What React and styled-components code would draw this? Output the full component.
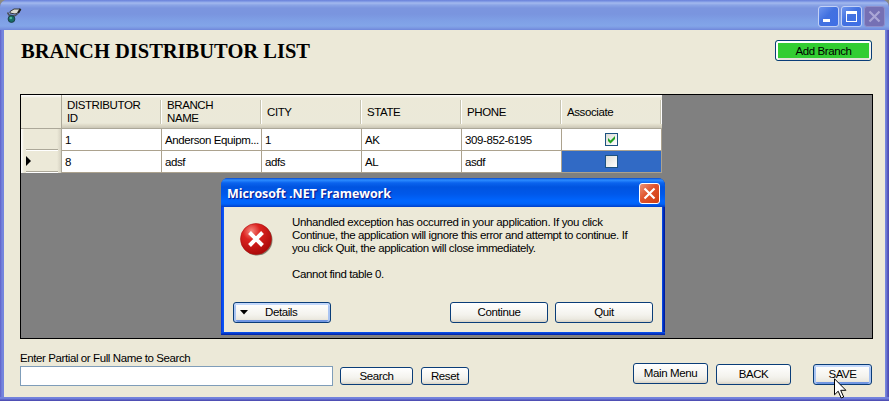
import React from "react";
import styled, { createGlobalStyle, css } from "styled-components";

const GlobalStyle = createGlobalStyle`
  * { box-sizing: border-box; }
  html, body { margin: 0; padding: 0; overflow: hidden; background: #8c8a80; }
  body { font: 11.5px/13px "Liberation Sans", Arial, sans-serif; letter-spacing: -0.4px; color: #000; }
`;

const Window = styled.main`
  position: relative;
  width: 889px;
  height: 401px;
  display: flex;
  flex-direction: column;
  border-radius: 7px 7px 0 0;
  overflow: hidden;
  background: linear-gradient(90deg, #5f5fc8 0, #7585dd 2px, #7585dd 886px, #4f4fb4 888px);
`;

const TitleBar = styled.header`
  height: 30px;
  flex: none;
  display: flex;
  align-items: flex-start;
  padding: 6px 4px 0 6px;
  background: linear-gradient(#6a80d8 0, #7791e2 1px, #a3b9ee 3px, #8ba5e6 5px, #7b95df 8px, #7a95df 14px, #7fa0e6 21px, #82a5e8 26px, #7b98e2 28px, #6f86da 30px);
`;

const TitleSpacer = styled.div`flex: 1;`;

const Controls = styled.div`
  display: flex;
  gap: 2px;
`;

const ControlButton = styled.button`
  width: 21px;
  height: 21px;
  padding: 0;
  border: 1px solid ${(p) => (p.$disabled ? "#8f8fca" : "#c3d1f6")};
  border-radius: 3px;
  background: ${(p) => (p.$disabled ? "#7570b4" : "linear-gradient(135deg, #6e95ee, #4271e0 45%, #3f6fe6)")};
  svg { display: block; }
`;

const Client = styled.div`
  flex: 1;
  margin: 0 4px;
  padding: 0 12px 0 16px;
  background: #ece9d8;
  display: flex;
  flex-direction: column;
`;

const Frame = styled.div`
  flex: none;
  height: 4px;
  background: linear-gradient(#7585dd 0, #6f7edb 50%, #4f4fb4 75%);
`;

const Heading = styled.div`
  height: 64px;
  padding: 10px 1px 0 0;
  display: flex;
  justify-content: space-between;
  align-items: flex-start;
`;

const Title = styled.h1`
  margin: -1px 0 0 1px;
  font: bold 20.5px/24px "Liberation Serif", "Times New Roman", serif;
  letter-spacing: 0;
  white-space: nowrap;
`;

const Button = styled.button`
  width: ${(p) => p.$width}px;
  height: ${(p) => p.$height || 21}px;
  flex: none;
  padding: 0;
  display: flex;
  align-items: center;
  justify-content: center;
  font: inherit;
  color: #000;
  letter-spacing: inherit;
  border: 1px solid #0a3d78;
  border-radius: 3px;
  background: linear-gradient(#fff, #f4f3ee 60%, #ebe9e0 85%, #d8d2c4);
  ${(p) => p.$focused && css`box-shadow: inset 0 2px 0 #c3d8fb, inset 2px 0 0 #a9c4f2, inset -2px 0 0 #a9c4f2, inset 0 -2px 0 #7096e2;`}
  ${(p) => p.$green && css`
    padding-top: 1px;
    background: #32cd32;
    box-shadow: inset 0 2px 0 #fff, inset 2px 0 0 #fff, inset -2px 0 0 #f4f4ee, inset 0 -2px 0 #e4e2da;
  `}
`;

const Grid = styled.section`
  width: 853px;
  height: 245px;
  flex: none;
  border: 1px solid #000;
  background: #808080;
`;

const GridRow = styled.div`
  display: grid;
  grid-template-columns: 41px repeat(6, 100px);
  width: 641px;
  height: ${(p) => (p.$header ? 34 : 22)}px;
`;

const HeadCell = styled.div`
  display: flex;
  align-items: center;
  padding: 1px 0 0 5px;
  line-height: 13px;
  white-space: pre;
  border-bottom: 1px solid #aca899;
  background:
    linear-gradient(#c6c3b0, #c6c3b0) right 1px top 5px / 1px 24px no-repeat,
    linear-gradient(#fff, #fff) right 0 top 5px / 1px 24px no-repeat,
    linear-gradient(#fff 0, #ece9d8 3px, #ebe9d9 28px, #dfdbc9 30px, #cbc7b7 33px);
  ${(p) => p.$corner && css`
    background: linear-gradient(#fff, #ece9d8 3px);
    border-right: 1px solid #aca899;
  `}
`;

const Cell = styled.div`
  display: flex;
  align-items: center;
  padding: 2px 0 0 3px;
  white-space: nowrap;
  border-right: 1px solid #aca28e;
  border-bottom: 1px solid #aca28e;
  background: ${(p) => (p.$selected ? "#316ac5" : "#fff")};
  ${(p) => p.$centered && css`justify-content: center; padding: 0 1px 0 0;`}
`;

const RowHead = styled.div`
  display: flex;
  align-items: center;
  padding-left: 5px;
  border-right: 1px solid #aca899;
  background:
    linear-gradient(#aca899, #aca899) left 5px bottom 1px / 32px 1px no-repeat,
    linear-gradient(#fff, #fff) left 5px bottom 0 / 32px 1px no-repeat,
    linear-gradient(90deg, #fff, #ece9d8 3px, #ece9d8 36px, #d6d2c2);
  svg { margin-top: -2px; }
`;

const Check = styled.span`
  width: 13px;
  height: 13px;
  border: 1px solid #1c5180;
  background: linear-gradient(135deg, #dcdcd7, #fff);
  svg { display: block; }
`;

const SearchLabel = styled.label`
  display: block;
  margin-bottom: 1px;
`;

const Footer = styled.footer`
  flex: 1;
  padding-top: 13px;
`;

const Actions = styled.div`
  display: flex;
  align-items: flex-start;
`;

const SearchInput = styled.input`
  width: 313px;
  height: 20px;
  border: 1px solid #7f9db9;
  background: #fff;
  outline: none;
`;

const Slot = styled.div`
  margin: ${(p) => p.$top}px 0 0 ${(p) => p.$left}px;
`;

const Dialog = styled.div`
  position: absolute;
  left: 221px;
  top: 178px;
  width: 444px;
  height: 157px;
  display: flex;
  flex-direction: column;
  border-radius: 7px 7px 0 0;
  overflow: hidden;
  background: linear-gradient(90deg, #0831d9 0, #0855f5 2px, #0855f5 441px, #001ea0 443px);
`;

const DialogTitle = styled.div`
  height: 29px;
  flex: none;
  display: flex;
  justify-content: space-between;
  padding: 5px 5px 0 6px;
  font: bold 12.5px/22px "Open Sans", "Noto Sans", sans-serif;
  letter-spacing: -0.08px;
  color: #fff;
  text-shadow: 1px 1px 1px #0f1089;
  background: linear-gradient(#0847ca 0, #2c8cff 2px, #0a63ee 5px, #0054e0 9px, #0058ea 16px, #0066ff 23px, #0062f8 26px, #003fc8 29px);
`;

const CloseButton = styled.button`
  width: 21px;
  height: 21px;
  padding: 0;
  border: 1px solid #fff;
  border-radius: 3px;
  background: linear-gradient(135deg, #ec9478, #e0532c 45%, #cf3e13);
  svg { display: block; }
`;

const DialogBody = styled.div`
  flex: 1;
  margin: 0 3px;
  background: #ece9d8;
  display: flex;
  flex-direction: column;
  padding: 9px;
`;

const DialogFrame = styled.div`
  height: 3px;
  flex: none;
  background: linear-gradient(#0855f5, #001ea0);
`;

const MessageRow = styled.div`
  flex: 1;
  display: flex;
  svg { flex: none; margin: 6px 19px 0 6px; }
`;

const Message = styled.div`
  white-space: nowrap;
`;

const Line = styled.div`
  height: 13px;
  letter-spacing: ${(p) => p.$spacing}px;
`;

const DialogButtons = styled.div`
  display: flex;
  gap: 7px;
`;

const DetailsButton = styled(Button)`
  justify-content: flex-start;
  margin-right: auto;
  svg { margin: 0 16px 0 6px; }
`;

const Cursor = styled.svg`
  position: absolute;
  left: 834px;
  top: 378px;
`;

const AppIcon = () => (
  <svg width="18" height="18" viewBox="0 0 18 18">
    <path d="M4 5.500 8 3h6.500L13 6.500 9 8 4 7z" fill="#dcdcd2" stroke="#34383c" />
    <path d="M14.500 3 12 7" stroke="#222" strokeWidth="2" />
    <path d="M1.500 6.500 3 9l5.500 1 3-2" fill="none" stroke="#4b5057" strokeWidth="1.500" />
    <circle cx="5.500" cy="13" r="3.400" fill="#176d66" stroke="#1c3f48" />
    <circle cx="4.800" cy="12" r="1.300" fill="#4fb99a" />
  </svg>
);

const columns = ["DISTRIBUTOR\nID", "BRANCH\nNAME", "CITY", "STATE", "PHONE", "Associate"];

const rows = [
  { cells: ["1", "Anderson Equipm...", "1", "AK", "309-852-6195"], checked: true },
  { cells: ["8", "adsf", "adfs", "AL", "asdf"], current: true },
];

const message = [
  ["Unhandled exception has occurred in your application. If you click", -0.35],
  ["Continue, the application will ignore this error and attempt to continue. If", -0.4],
  ["you click Quit, the application will close immediately.", -0.39],
  ["", 0],
  ["Cannot find table 0.", -0.4],
];

export default function App() {
  return (
    <>
      <GlobalStyle />
      <Window>
        <TitleBar>
          <AppIcon />
          <TitleSpacer />
          <Controls>
            <ControlButton aria-label="Minimize">
              <svg width="19" height="19"><path d="M4 12h7v3H4z" fill="#fff" /></svg>
            </ControlButton>
            <ControlButton aria-label="Maximize">
              <svg width="19" height="19"><path d="M4 4h11v11H4zM5 7v7h9V7z" fill="#fff" fillRule="evenodd" /></svg>
            </ControlButton>
            <ControlButton aria-label="Close" $disabled>
              <svg width="19" height="19"><path d="m4.500 4.500 10 10m0-10-10 10" stroke="#aaa6d6" strokeWidth="2.200" /></svg>
            </ControlButton>
          </Controls>
        </TitleBar>
        <Client>
          <Heading>
            <Title>BRANCH DISTRIBUTOR LIST</Title>
            <Button $width={97} $green>Add Branch</Button>
          </Heading>
          <Grid>
            <GridRow $header>
              <HeadCell $corner />
              {columns.map((name) => (
                <HeadCell key={name}>{name}</HeadCell>
              ))}
            </GridRow>
            {rows.map((row, i) => (
              <GridRow key={i}>
                <RowHead>
                  {row.current && <svg width="6" height="10"><path d="M0 0v10l5-5z" /></svg>}
                </RowHead>
                {row.cells.map((value, j) => (
                  <Cell key={j}>{value}</Cell>
                ))}
                <Cell $centered $selected={row.current}>
                  <Check>
                    {row.checked && (
                      <svg width="11" height="11"><path d="m2 4 2.500 2.500L9 2v3L4.500 9.500 2 7z" fill="#21a121" /></svg>
                    )}
                  </Check>
                </Cell>
              </GridRow>
            ))}
          </Grid>
          <Footer>
            <SearchLabel>Enter Partial or Full Name to Search</SearchLabel>
            <Actions>
              <SearchInput />
              <Slot $left={7} $top={1}><Button $width={73} $height={18}>Search</Button></Slot>
              <Slot $left={8} $top={1}><Button $width={48} $height={18}>Reset</Button></Slot>
              <Slot $left={164} $top={-3}><Button $width={75}>Main Menu</Button></Slot>
              <Slot $left={8} $top={-2}><Button $width={75}>BACK</Button></Slot>
              <Slot $left={22} $top={-2}><Button $width={59} $focused>SAVE</Button></Slot>
            </Actions>
          </Footer>
        </Client>
        <Frame />
        <Dialog role="alertdialog">
          <DialogTitle>
            Microsoft .NET Framework
            <CloseButton aria-label="Close">
              <svg width="19" height="19"><path d="m4.500 4.500 10 10m0-10-10 10" stroke="#fff" strokeWidth="2.200" /></svg>
            </CloseButton>
          </DialogTitle>
          <DialogBody>
            <MessageRow>
              <svg width="34" height="34" viewBox="0 0 34 34">
                <defs>
                  <radialGradient id="ball" cx=".35" cy=".25" r=".8">
                    <stop offset="0" stopColor="#f58a80" />
                    <stop offset=".35" stopColor="#dc2420" />
                    <stop offset="1" stopColor="#a80808" />
                  </radialGradient>
                </defs>
                <circle cx="18" cy="18" r="15.500" fill="#6b6555" opacity=".8" />
                <circle cx="17" cy="17" r="15.500" fill="url(#ball)" stroke="#b01010" strokeWidth=".6" />
                <path d="m10.500 10.500 13 13m0-13-13 13" stroke="#fff" strokeWidth="4" />
              </svg>
              <Message>
                {message.map(([text, spacing], i) => (
                  <Line key={i} $spacing={spacing}>{text}</Line>
                ))}
              </Message>
            </MessageRow>
            <DialogButtons>
              <DetailsButton $width={98} $focused>
                <svg width="9" height="5"><path d="M0 0h8L4 4.500z" /></svg>
                Details
              </DetailsButton>
              <Button $width={98}>Continue</Button>
              <Button $width={98}>Quit</Button>
            </DialogButtons>
          </DialogBody>
          <DialogFrame />
        </Dialog>
        <Cursor width="13" height="21" viewBox="0 0 13 21">
          <path d="M.5.800v16l3.700-3.600 3 6.800 2.500-1-3-6.700h5.200z" fill="#fff" stroke="#000" />
        </Cursor>
      </Window>
    </>
  );
}
